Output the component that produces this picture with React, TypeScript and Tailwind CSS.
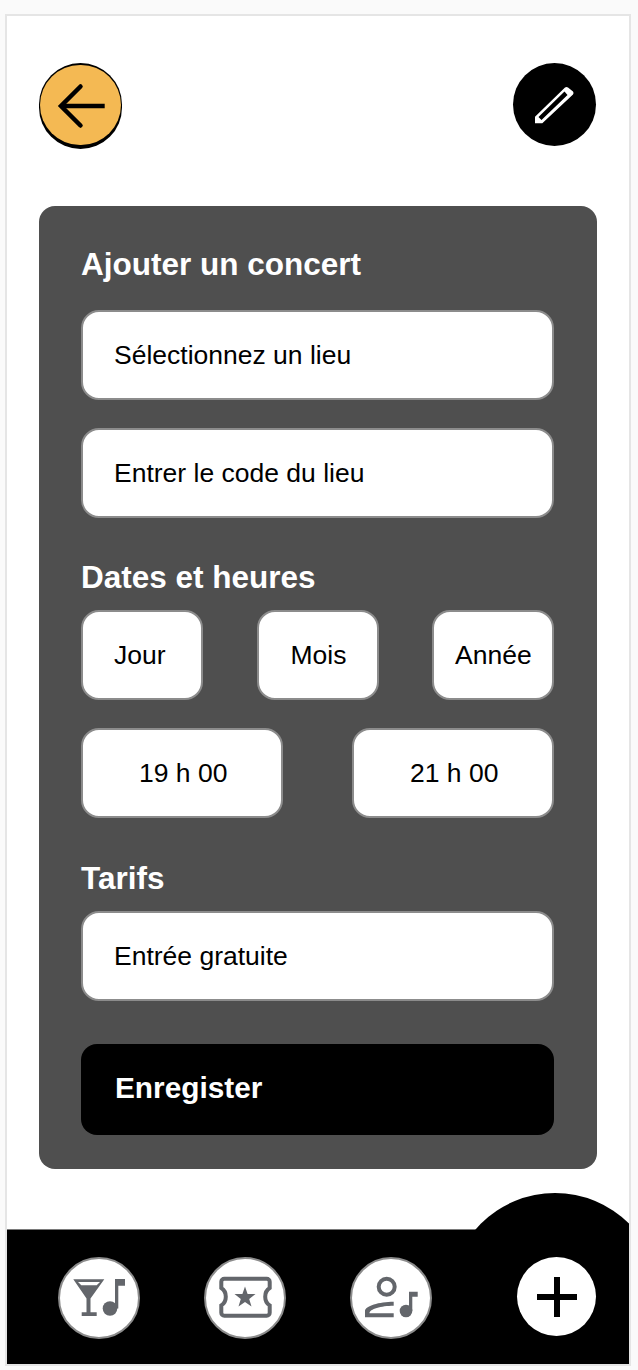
// App.tsx
// "Ajouter un concert" form screen with the bottom navigation bar.

const FONT = "font-['Liberation_Sans',Arial,sans-serif]";
const ICON_GREY = '#63666b';

function Field({ label }: { label: string }) {
  return (
    <div className="flex h-[90px] items-center rounded-[18px] border-2 border-[#8c8c8c] bg-white pl-[31px] pt-[2px] text-[26.5px] text-black">
      {label}
    </div>
  );
}

function SmallField({ label, className }: { label: string; className: string }) {
  return (
    <div
      className={`flex h-[90px] items-center rounded-[18px] border-2 border-[#8c8c8c] bg-white pt-[2px] text-[26.5px] text-black ${className}`}
    >
      {label}
    </div>
  );
}

function Heading({ children }: { children: string }) {
  return (
    <h2 className="flex h-[34px] items-center text-[31.5px] font-bold text-white">
      {children}
    </h2>
  );
}

function NavCircle({ children }: { children: React.ReactNode }) {
  return (
    <button className="flex h-[82px] w-[82px] items-center justify-center rounded-full border-2 border-[#8c8c8c] bg-white">
      {children}
    </button>
  );
}

function DrinkIcon() {
  return (
    <svg width="78" height="78" viewBox="0 0 78 78" fill={ICON_GREY}>
      <path
        fillRule="evenodd"
        d="M13.300 20.300H44.300L30.500 39.500V53.300H36.700V57H21.700V53.300H26.500V39.500zM18 23l3.300 3.300H36.700L40 23z"
      />
      <circle cx="50" cy="49.500" r="7.300" />
      <path d="M55 20H65V26.700H58.300V49.500H55z" />
    </svg>
  );
}

function TicketIcon() {
  return (
    <svg width="78" height="78" viewBox="0 0 78 78">
      <path
        d="M18.300 19.700H60.700a3 3 0 0 1 3 3V29c-2.800 1.800-4.500 5-4.500 8.700s1.700 6.900 4.500 8.700V53.700a3 3 0 0 1-3 3H18.300a3 3 0 0 1-3-3V46.400c2.800-1.800 4.500-5 4.500-8.700s-1.700-6.900-4.500-8.700V22.700a3 3 0 0 1 3-3z"
        fill="none"
        stroke={ICON_GREY}
        strokeWidth="4"
      />
      <path
        d="M39 27.500L41.600 34.900 49.500 35.100 43.200 39.900 45.500 47.400 39 42.900 32.500 47.400 34.800 39.900 28.500 35.100 36.400 34.900z"
        fill={ICON_GREY}
      />
    </svg>
  );
}

function ArtistIcon() {
  return (
    <svg width="78" height="78" viewBox="0 0 78 78" fill={ICON_GREY}>
      <circle cx="34.700" cy="27.700" r="8" fill="none" stroke={ICON_GREY} strokeWidth="4" />
      <path d="M13 58.300V52C13 47 27 42.700 41.700 42.700V46.700C29 46.700 17.500 50 17.500 54.300H41.700V58.300z" />
      <circle cx="54" cy="52" r="6.300" />
      <path d="M57 32.700H65.700V37.700H60.300V52H57z" />
    </svg>
  );
}

export default function App() {
  return (
    <div className={`h-[1370px] w-[638px] bg-[#fafafa] px-[5px] pt-[14px] ${FONT}`}>
      <div className="relative flex h-[1352px] w-[626px] flex-col overflow-hidden border-2 border-[#e5e5e5] bg-white">
        <div className="h-[190px] shrink-0 px-[32px] pt-[47px]">
          <div className="flex items-start justify-between">
            <button className="flex h-[86px] w-[83px] items-start justify-center rounded-full bg-black pt-[2px]">
              <span className="flex h-[80px] w-[81px] items-center justify-center rounded-full bg-[#f4b953]">
                <svg width="81" height="80" viewBox="0 0 81 80" fill="none" stroke="black" strokeWidth="4.500">
                  <path d="M64.700 41H21" />
                  <path d="M40.500 21.500L21 41l19.500 19.500" strokeLinecap="round" />
                </svg>
              </span>
            </button>
            <button className="mr-[1px] flex h-[83px] w-[83px] items-center justify-center rounded-full bg-black">
              <svg width="83" height="83" viewBox="0 0 83 83" fill="white">
                <path
                  fillRule="evenodd"
                  d="M22 60.300V53.700L52 24.500a2.500 2.500 0 0 1 3 0L60 28.500a2.500 2.500 0 0 1 0 3L29.300 60.300zM25.500 54L51.500 28.500 54.500 32 28.500 57z"
                />
              </svg>
            </button>
          </div>
        </div>

        <main className="mx-[32px] flex h-[963px] flex-col rounded-[16px] bg-[#4f4f4f] pl-[42px] pr-[43px] pt-[42px]">
          <Heading>Ajouter un concert</Heading>
          <div className="mt-[28px] flex flex-col gap-[28px]">
            <Field label="Sélectionnez un lieu" />
            <Field label="Entrer le code du lieu" />
          </div>

          <div className="mt-[43px]">
            <Heading>Dates et heures</Heading>
          </div>
          <div className="mt-[15px] flex justify-between">
            <SmallField label="Jour" className="w-[122px] pl-[31px]" />
            <SmallField label="Mois" className="w-[122px] pl-[32px]" />
            <SmallField label="Année" className="w-[122px] pl-[21px]" />
          </div>
          <div className="mt-[28px] flex justify-between">
            <SmallField label="19 h 00" className="w-[202px] pl-[56px]" />
            <SmallField label="21 h 00" className="w-[202px] pl-[56px]" />
          </div>

          <div className="mt-[44px]">
            <Heading>Tarifs</Heading>
          </div>
          <div className="mt-[15px]">
            <Field label="Entrée gratuite" />
          </div>

          <button className="mt-[43px] flex h-[91px] items-center rounded-[16px] bg-black pb-[2px] pl-[34px] text-[29.8px] font-bold text-white">
            Enregister
          </button>
        </main>

        <nav className="relative mt-auto flex h-[135px] items-start border-t border-[#7a7a7a] bg-black pl-[51px] pt-[27px]">
          <div
            aria-hidden
            className="absolute -top-[37px] left-[443px] h-[210px] w-[210px] rounded-full bg-black"
          />
          <div className="relative flex items-start gap-[64px]">
            <NavCircle>
              <DrinkIcon />
            </NavCircle>
            <NavCircle>
              <TicketIcon />
            </NavCircle>
            <NavCircle>
              <ArtistIcon />
            </NavCircle>
          </div>
          <button className="relative ml-[85px] flex h-[79px] w-[79px] items-center justify-center rounded-full bg-white">
            <svg width="40" height="40" viewBox="0 0 40 40" stroke="black" strokeWidth="6">
              <path d="M20 0v40M0 20h40" />
            </svg>
          </button>
        </nav>
      </div>
    </div>
  );
}
